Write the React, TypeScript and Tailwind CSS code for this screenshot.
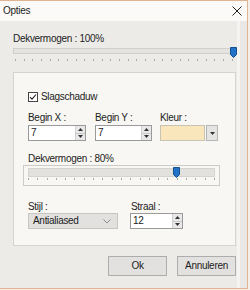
import React from "react";

const Ticks = ({ count, w }: { count: number; w: string }) => (
  <div className={`flex justify-between h-[2px] ${w}`}>
    {Array.from({ length: count }).map((_, i) => (
      <div key={i} className="w-px h-[2px] bg-[#a8a8a8]" />
    ))}
  </div>
);

const Thumb = () => (
  <svg width="7" height="11" viewBox="0 0 7 11">
    <path d="M0.5 0.5h6v7l-3 3l-3-3z" fill="#2272c8" stroke="#15508f" />
  </svg>
);

const Spin = () => (
  <div className="flex flex-col w-[10px] h-full border-l border-[#d0d0d0]">
    <div className="flex-1 bg-[#e8e8e8] flex items-center justify-center border-b border-[#c8c8c8]">
      <svg width="5" height="3" viewBox="0 0 5 3">
        <path d="M0 3L2.5 0L5 3z" fill="#333" />
      </svg>
    </div>
    <div className="flex-1 bg-[#e8e8e8] flex items-center justify-center">
      <svg width="5" height="3" viewBox="0 0 5 3">
        <path d="M0 0L2.5 3L5 0z" fill="#333" />
      </svg>
    </div>
  </div>
);

const SpinInput = ({ value, w }: { value: string; w: string }) => (
  <div className={`flex h-[16px] ${w} bg-white border border-[#9a9a9a]`}>
    <div className="flex-1 pl-[2px] leading-[14px]">{value}</div>
    <Spin />
  </div>
);

export default function App() {
  return (
    <div className="w-[250px] h-[290px] bg-[#f4efe9] font-['Liberation_Sans',Arial,sans-serif] text-[10px] tracking-[-0.3px] text-[#1c1c1c]">
      <div className="w-[248px] h-[289px] border-t border-r border-b border-[#e0b391] flex flex-col bg-[#ecebe8]">
        {/* Title bar */}
        <div className="h-[20px] bg-[#fbfaf8] flex items-center justify-between pl-[3px] pr-[5px]">
          <span className="leading-[16px]">Opties</span>
          <svg width="10" height="10" viewBox="0 0 10 10">
            <path d="M0.5 0.5L9.5 9.5M9.5 0.5L0.5 9.5" stroke="#222" strokeWidth="1" />
          </svg>
        </div>
        {/* Body */}
        <div className="flex-1 flex">
          <div className="w-[237px] pl-[13px] pt-[10px] flex flex-col">
            <div className="h-[16px] leading-[16px]">Dekvermogen : 100%</div>
            <div className="relative w-[223px] h-[11px]">
              <div className="mt-[1px] w-[220px] h-[6px] bg-[#e4e3e0] border border-[#d0cfcb]" />
              <div className="absolute left-[217px] top-0">
                <Thumb />
              </div>
            </div>
            <div className="mt-[1px] pl-[2px]">
              <Ticks count={26} w="w-[218px]" />
            </div>
            {/* Group panel */}
            <div className="mt-[11px] w-[223px] h-[174px] border border-[#d6d4cf] bg-[#f8f7f3] pl-[14px] pt-[16px] flex flex-col">
              <div className="h-[16px] flex items-center gap-[3px]">
                <div className="w-[10px] h-[10px] border border-[#444] bg-white flex items-center justify-center">
                  <svg width="8" height="8" viewBox="0 0 8 8">
                    <path d="M1 4.2L3 6.2L7 1.5" stroke="#222" strokeWidth="1.1" fill="none" />
                  </svg>
                </div>
                <span className="leading-[16px]">Slagschaduw</span>
              </div>
              <div className="mt-[6px] flex">
                <div className="w-[58px] flex flex-col">
                  <div className="h-[14px] leading-[14px]">Begin X :</div>
                  <SpinInput value="7" w="w-[58px]" />
                </div>
                <div className="ml-[9px] w-[57px] flex flex-col">
                  <div className="h-[14px] leading-[14px]">Begin Y :</div>
                  <SpinInput value="7" w="w-[57px]" />
                </div>
                <div className="ml-[8px] flex flex-col">
                  <div className="h-[14px] leading-[14px]">Kleur :</div>
                  <div className="flex h-[16px]">
                    <div className="w-[45px] h-full bg-[#f9e6bb] border border-[#c9c3b4]" />
                    <div className="ml-[1px] w-[12px] h-full bg-[#e4e4e2] border border-[#b5b5b5] flex items-center justify-center">
                      <svg width="5" height="3" viewBox="0 0 5 3">
                        <path d="M0 0L2.5 3L5 0z" fill="#333" />
                      </svg>
                    </div>
                  </div>
                </div>
              </div>
              <div className="mt-[12px] h-[12px] leading-[12px]">Dekvermogen : 80%</div>
              <div className="-ml-[5px] w-[197px] h-[21px] border border-[#cdcbc6] px-[4px] pt-[2px] relative">
                <div className="h-[9px] bg-[#e2e1dd] border border-[#d5d4d0]" />
                <div className="mt-[1px]">
                  <Ticks count={21} w="w-[187px]" />
                </div>
                <div className="absolute left-[149px] top-[1px]">
                  <Thumb />
                </div>
              </div>
              <div className="mt-[15px] flex">
                <div className="w-[90px] flex flex-col">
                  <div className="h-[12px] leading-[12px]">Stijl :</div>
                  <div className="h-[16px] w-[90px] bg-[#e2e1df] border border-[#c8c6c2] flex items-center justify-between pl-[4px] pr-[6px]">
                    <span className="leading-[14px]">Antialiased</span>
                    <svg width="8" height="5" viewBox="0 0 8 5">
                      <path d="M0.5 0.5L4 4L7.5 0.5" stroke="#8a8a8a" fill="none" />
                    </svg>
                  </div>
                </div>
                <div className="ml-[12px] flex flex-col">
                  <div className="h-[12px] leading-[12px] pl-[1px]">Straal :</div>
                  <SpinInput value="12" w="w-[53px]" />
                </div>
              </div>
            </div>
            {/* Footer */}
            <div className="mt-[10px] w-[223px] flex justify-end gap-[10px]">
              <div className="w-[59px] h-[20px] bg-[#e2e1df] border border-[#adadad] flex items-center justify-center leading-[16px]">
                Ok
              </div>
              <div className="w-[59px] h-[20px] bg-[#e2e1df] border border-[#adadad] flex items-center justify-center leading-[16px]">
                Annuleren
              </div>
            </div>
          </div>
          <div className="w-[3px] bg-[#f4f4f3]" />
          <div className="flex-1 bg-[#e9e8e6]" />
        </div>
      </div>
    </div>
  );
}
